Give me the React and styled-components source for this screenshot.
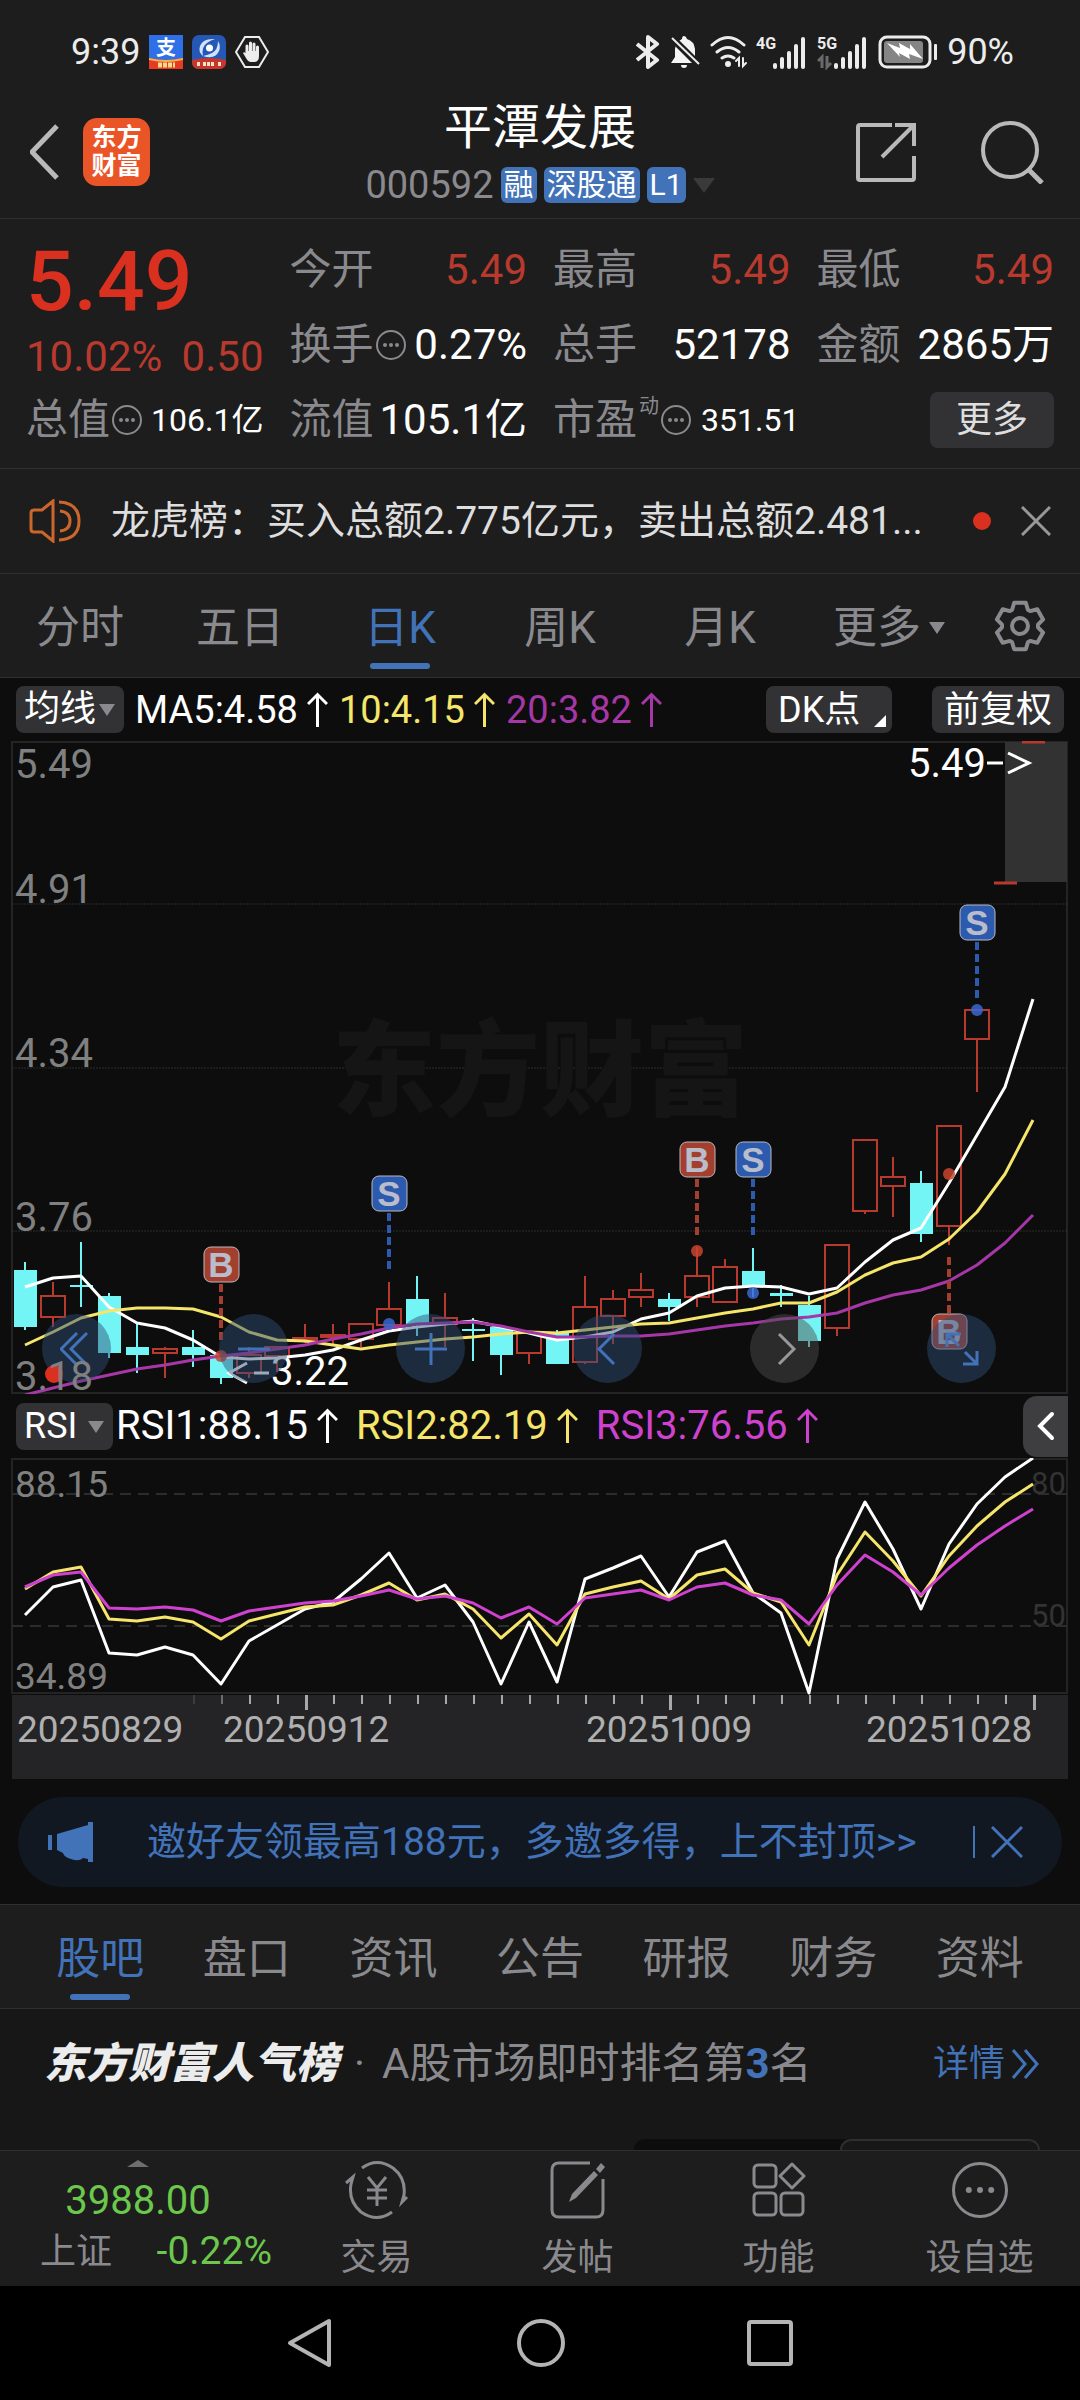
import React from 'react';
import styled, { createGlobalStyle, ThemeProvider } from 'styled-components';

const theme = {
  page: '#0d0d0d',
  panel: '#1d1d1d',
  button: '#323234',
  line: '#2f2f30',
  grey: '#8a8a8e',
  light: '#dededf',
  blue: '#4272b8',
  red: '#d93020',
  softRed: '#b8392e',
  green: '#6cc84c',
  yellow: '#f5e56b',
  purple: '#a637a6',
  magenta: '#cf42cf',
  cyan: '#73f5f5',
};

const GlobalStyle = createGlobalStyle`
  *, *::before, *::after {
    box-sizing: border-box;
  }

  body {
    margin: 0;
    background-color: #000;
    color: #fff;
    font-family: Roboto, "Noto Sans CJK SC", sans-serif;
    font-size: 36px;
    line-height: 1;
  }

  button, select {
    margin: 0;
    padding: 0;
    border: 0;
    background: none;
    color: inherit;
    font: inherit;
    cursor: pointer;
  }

  a {
    color: inherit;
    text-decoration: none;
  }

  h1, h2, p, dl, dt, dd {
    margin: 0;
    font-weight: 400;
  }

  svg {
    display: block;
    flex-shrink: 0;
  }
`;

const StyledApp = styled.div`
  background-color: ${({ theme }) => theme.page};
`;

const StyledStatusBar = styled.div`
  display: flex;
  align-items: center;
  justify-content: space-between;
  height: 70px;
  padding: 34px 66px 0 71px;
  background-color: ${({ theme }) => theme.panel};
  color: #ececec;
`;

const StyledStatusGroup = styled.div`
  display: flex;
  align-items: center;
  gap: 9px;
`;

const StyledHeader = styled.header`
  display: grid;
  grid-template-columns: 1fr auto 1fr;
  align-items: center;
  padding: 30px 30px 15px;
  border-bottom: 1px solid ${({ theme }) => theme.line};
  background-color: ${({ theme }) => theme.panel};
`;

const StyledHeaderSide = styled.div`
  display: flex;
  align-items: center;
  justify-content: ${({ $end }) => ($end ? 'flex-end' : 'flex-start')};
  gap: ${({ $end }) => ($end ? '64px' : '20px')};
`;

const StyledAppLogo = styled.a`
  display: flex;
  align-items: center;
  justify-content: center;
  width: 67px;
  height: 68px;
  border-radius: 14px;
  background-color: #ea5528;
  font-size: 25px;
  font-weight: 700;
  line-height: 28px;
`;

const StyledTitle = styled.h1`
  font-size: 48px;
  line-height: 56px;
  text-align: center;
`;

const StyledCodeRow = styled.div`
  display: flex;
  align-items: center;
  gap: 7px;
  height: 36px;
  margin-top: 11px;
  color: ${({ theme }) => theme.grey};
  font-size: 38px;
`;

const StyledTag = styled.span`
  padding: 0 3px;
  border-radius: 6px;
  background-color: ${({ theme }) => theme.blue};
  color: #fff;
  font-size: 30px;
  line-height: 36px;
`;

const StyledTriangle = styled.span`
  flex-shrink: 0;
  width: 0;
  height: 0;
  border: solid transparent;
  border-width: ${({ $size }) => `0 ${$size}px`};
  border-top: ${({ $tall, $up }) => ($up ? 0 : $tall)}px solid ${({ $color }) => $color};
  border-bottom: ${({ $tall, $up }) => ($up ? $tall : 0)}px solid ${({ $color }) => $color};
`;

const StyledQuote = styled.section`
  display: grid;
  grid-template-columns: repeat(4, minmax(0, 1fr));
  grid-auto-rows: 75px;
  column-gap: 26px;
  padding: 13px 26px 11px;
  border-bottom: 1px solid ${({ theme }) => theme.line};
  background-color: ${({ theme }) => theme.panel};
`;

const StyledPrice = styled.div`
  grid-row: span 2;
  display: flex;
  flex-direction: column;
  justify-content: flex-end;
  gap: 9px;
  padding-bottom: 3px;
  color: ${({ theme }) => theme.red};
`;

const StyledPriceValue = styled.strong`
  font-size: 84px;
  font-weight: 500;
  line-height: 88px;
`;

const StyledPriceChange = styled.div`
  display: flex;
  justify-content: space-between;
  color: ${({ theme }) => theme.softRed};
  font-size: 42px;
  line-height: 44px;
`;

const StyledStat = styled.dl`
  display: flex;
  align-items: center;
  justify-content: ${({ $packed }) => ($packed ? 'flex-start' : 'space-between')};
  gap: ${({ $packed }) => ($packed ? '10px' : '0')};
  white-space: nowrap;
`;

const StyledStatLabel = styled.dt`
  display: flex;
  align-items: center;
  gap: 2px;
  color: ${({ theme }) => theme.grey};
  font-size: 42px;
`;

const StyledStatNote = styled.sup`
  align-self: flex-start;
  font-size: 20px;
  line-height: 14px;
`;

const StyledStatValue = styled.dd`
  color: ${({ theme, $up }) => ($up ? theme.softRed : '#fff')};
  font-size: ${({ $small }) => ($small ? '32px' : '42px')};
`;

const StyledMoreButton = styled.button`
  justify-self: end;
  align-self: center;
  width: 124px;
  height: 56px;
  border-radius: 8px;
  background-color: ${({ theme }) => theme.button};
  color: ${({ theme }) => theme.light};
`;

const StyledNotice = styled.section`
  display: flex;
  align-items: center;
  height: 105px;
  padding: 0 29px;
  border-bottom: 1px solid ${({ theme }) => theme.line};
  background-color: ${({ theme }) => theme.panel};
`;

const StyledNoticeText = styled.a`
  flex: 1;
  margin: 0 46px 0 29px;
  color: ${({ theme }) => theme.light};
  font-size: 39px;
  white-space: nowrap;
`;

const StyledUnreadDot = styled.span`
  width: 18px;
  height: 18px;
  margin-right: 30px;
  border-radius: 50%;
  background-color: ${({ theme }) => theme.red};
`;

const StyledTabs = styled.nav`
  display: flex;
  height: 104px;
  padding: ${({ $inset }) => ($inset ? '0 27px' : '0')};
  border-bottom: 1px solid ${({ theme }) => theme.line};
  background-color: ${({ theme }) => theme.panel};
`;

const StyledTab = styled.button`
  flex: 1;
  display: flex;
  flex-direction: column;
  align-items: center;
  justify-content: flex-end;
  gap: 13px;
  padding-bottom: 8px;
  color: ${({ theme, $active }) => (theme[$active ? 'blue' : 'grey'])};
  font-size: 44px;
  line-height: 44px;

  &::after {
    content: '';
    width: 60px;
    height: 6px;
    border-radius: 3px;
    background-color: ${({ theme, $active }) => ($active ? theme.blue : 'transparent')};
  }
`;

const StyledTabLabel = styled.span`
  display: flex;
  align-items: center;
  gap: 8px;
  padding-left: ${({ $menu }) => ($menu ? '18px' : '0')};
`;

const StyledSettings = styled.button`
  display: flex;
  align-items: center;
  justify-content: center;
  width: 120px;
  color: ${({ theme }) => theme.grey};
`;

const StyledIndicatorRow = styled.div`
  display: flex;
  align-items: center;
  height: ${({ $rsi }) => ($rsi ? '64px' : '63px')};
  padding: ${({ $rsi }) => ($rsi ? '0 12px 0 16px' : '0 16px')};
`;

const StyledPicker = styled.label`
  position: relative;
  display: block;
  width: ${({ $width }) => $width}px;

  ${StyledTriangle} {
    position: absolute;
    top: 18px;
    right: 9px;
    pointer-events: none;
  }
`;

const StyledSelect = styled.select`
  appearance: none;
  width: 100%;
  height: 47px;
  padding: 0 8px;
  border-radius: 8px;
  background-color: ${({ theme }) => theme.button};
  line-height: 47px;
`;

const StyledChip = styled.button`
  display: flex;
  align-items: center;
  justify-content: space-between;
  width: ${({ $width }) => $width}px;
  height: 47px;
  margin-left: ${({ $push }) => ($push ? 'auto' : '40px')};
  padding: 0 6px 0 12px;
  border-radius: 8px;
  background-color: ${({ theme }) => theme.button};
  white-space: nowrap;
`;

const StyledCorner = styled.span`
  align-self: flex-end;
  margin-bottom: 6px;
  border-bottom: 12px solid #fff;
  border-left: 12px solid transparent;
`;

const StyledReading = styled.span`
  display: flex;
  align-items: center;
  gap: 9px;
  margin-left: ${({ $gap }) => $gap}px;
  color: ${({ $color }) => $color};
  font-size: ${({ $large }) => ($large ? '40px' : '38px')};
`;

const StyledCollapse = styled.button`
  display: flex;
  align-items: center;
  justify-content: center;
  width: 45px;
  height: 61px;
  margin-left: auto;
  border-radius: 14px 0 0 14px;
  background-color: #3e3e40;
`;

const StyledChart = styled.div`
  position: relative;
`;

const StyledSvg = styled.svg`
  width: 100%;
  height: auto;
`;

const StyledScale = styled(StyledSvg)`
  position: absolute;
  top: 0;
  left: 0;
  overflow: visible;
  pointer-events: none;
`;

const StyledChartTools = styled.div`
  position: absolute;
  bottom: 11px;
  left: 0;
  display: flex;
  justify-content: space-between;
  width: 100%;
  padding: 0 84px 0 42px;
`;

const StyledRoundButton = styled.button`
  position: relative;
  display: flex;
  align-items: center;
  justify-content: center;
  width: 69px;
  height: 69px;
  border-radius: 50%;
  background-color: ${({ $muted }) => ($muted ? 'rgba(78, 78, 78, 0.48)' : 'rgba(48, 78, 119, 0.48)')};
  color: ${({ theme, $muted }) => ($muted ? '#98989a' : theme.blue)};
`;

const StyledToolBadge = styled.span`
  position: absolute;
  bottom: 0;
  left: 3px;
  width: 18px;
  height: 18px;
  border-radius: 50%;
  background-color: ${({ theme }) => theme.red};
`;

const StyledBanner = styled.section`
  display: flex;
  align-items: center;
  height: 90px;
  margin: 18px 18px 17px;
  padding: 0 39px 0 30px;
  border-radius: 45px;
  background-color: #111821;
  color: ${({ theme }) => theme.blue};
`;

const StyledBannerText = styled.a`
  flex: 1;
  padding-left: 53px;
  font-size: 39px;
  white-space: nowrap;
`;

const StyledBannerClose = styled.button`
  padding-left: 16px;
  border-left: 2px solid ${({ theme }) => theme.blue};
`;

const StyledForum = styled.main`
  border-top: 1px solid ${({ theme }) => theme.line};
`;

const StyledRanking = styled.section`
  display: flex;
  flex-direction: column;
  justify-content: space-between;
  height: 141px;
  padding: 32px 40px 0 44px;
  background-color: #171717;
`;

const StyledRankingRow = styled.div`
  display: flex;
  align-items: center;
  color: ${({ theme }) => theme.grey};
  font-size: 42px;
  line-height: 46px;
  white-space: nowrap;
`;

const StyledRankingName = styled.h2`
  color: #ececec;
  font-size: 42px;
  font-style: italic;
  font-weight: 900;
`;

const StyledRankingText = styled.p`
  margin-left: 16px;

  span {
    margin-right: 17px;
  }

  strong {
    color: ${({ theme }) => theme.blue};
    font-weight: 700;
  }
`;

const StyledDetails = styled.a`
  display: flex;
  align-items: center;
  gap: 6px;
  margin-left: auto;
  color: ${({ theme }) => theme.blue};
  font-size: 36px;
`;

const StyledSegment = styled.div`
  display: flex;
  justify-content: flex-end;
  align-self: flex-end;
  width: 406px;
  height: 11px;
  border-radius: 14px 14px 0 0;
  background-color: ${({ theme }) => theme.page};

  &::after {
    content: '';
    width: 200px;
    border: 2px solid ${({ theme }) => theme.line};
    border-bottom: 0;
    border-radius: 11px 11px 0 0;
    background-color: #171717;
  }
`;

const StyledBottomBar = styled.nav`
  display: flex;
  height: 136px;
  border-top: 1px solid ${({ theme }) => theme.line};
  background-color: ${({ theme }) => theme.panel};
  color: ${({ theme }) => theme.grey};
`;

const StyledIndex = styled.button`
  display: flex;
  flex-direction: column;
  align-items: center;
  width: 276px;
  padding: 9px 4px 0 40px;
`;

const StyledIndexHead = styled.span`
  display: flex;
  flex-direction: column;
  align-items: center;
  width: 100%;
  padding-right: 36px;
`;

const StyledIndexValue = styled.span`
  margin-top: 14px;
  color: ${({ theme }) => theme.green};
  font-size: 40px;
`;

const StyledIndexRow = styled.span`
  display: flex;
  align-items: center;
  justify-content: space-between;
  width: 100%;
  margin-top: 11px;

  em {
    color: ${({ theme }) => theme.green};
    font-size: 39px;
    font-style: normal;
  }
`;

const StyledBottomItem = styled.button`
  flex: 1;
  display: flex;
  flex-direction: column;
  align-items: center;
  gap: 20px;
  padding-top: 9px;
`;

const StyledSystemNav = styled.div`
  display: flex;
  align-items: center;
  justify-content: center;
  gap: 182px;
  height: 114px;
  background-color: #000;
  color: #b4b4b4;
`;

const Stroke = ({ w, h, width = 3, children, ...rest }) => (
  <svg
    width={w}
    height={h}
    viewBox={`0 0 ${w} ${h}`}
    fill="none"
    stroke="currentColor"
    strokeWidth={width}
    aria-hidden="true"
    {...rest}
  >
    {children}
  </svg>
);

const ArrowUp = () => (
  <Stroke w={21} h={36}>
    <path d="M10.500 35V3M1 12l9.500-9.500L20 12" />
  </Stroke>
);

const Cross = ({ size, ...rest }) => (
  <Stroke w={size} h={size} {...rest}>
    <path d={`M1 1L${size - 1} ${size - 1}M${size - 1} 1L1 ${size - 1}`} />
  </Stroke>
);

const MoreDots = ({ size = 30, width = 2, dot = 2 }) => (
  <Stroke w={size} h={size} width={width}>
    <circle cx={size / 2} cy={size / 2} r={size / 2 - width / 2} />
    {[-1, 0, 1].map((n) => (
      <circle
        key={n}
        cx={size / 2 + (n * size) / 5}
        cy={size / 2}
        r={dot}
        fill="currentColor"
        stroke="none"
      />
    ))}
  </Stroke>
);

const SignalIcon = ({ label, faded }) => (
  <svg width="52" height="44" viewBox="0 -5 52 44" fill="#ececec" aria-hidden="true">
    <text x="0" y="14" fontSize="16" fontWeight="700">{label}</text>
    {faded && <path d="M5 33V22l-4 4M10 21v11l4-4" stroke="#6a6a6a" strokeWidth="3" fill="none" />}
    {[6, 12, 18, 25, 32].map((height, i) => (
      <rect key={height} x={17 + i * 7} y={34 - height} width="4" height={height} rx="2" />
    ))}
  </svg>
);

const gearPoints = () => {
  const points = [];
  for (let i = 0; i < 6; i += 1) {
    [[-26, 18], [-14, 24], [14, 24], [26, 18]].forEach(([shift, radius]) => {
      const angle = ((i * 60 + shift - 90) * Math.PI) / 180;
      points.push(`${(26 + radius * Math.cos(angle)).toFixed(1)},${(26 + radius * Math.sin(angle)).toFixed(1)}`);
    });
  }
  return points.join(' ');
};

const StatusBar = () => (
  <StyledStatusBar>
    <StyledStatusGroup>
      <span>9:39</span>
      <svg width="34" height="34" viewBox="0 0 34 34" aria-hidden="true">
        <rect width="34" height="34" fill="#2f6fe8" />
        <path d="M0 23q17 4 34 0v11H0z" fill="#e43b22" />
        <path d="M0 23q17 4 34 0v2q-17 4-34 0z" fill="#f6b34a" />
        <text x="17" y="20" fontSize="20" fontWeight="700" fill="#fff" textAnchor="middle">支</text>
        <path d="M9 30h17" stroke="#ffd98a" strokeWidth="5" strokeDasharray="4 1" />
      </svg>
      <svg width="34" height="34" viewBox="0 0 34 34" aria-hidden="true">
        <rect width="34" height="34" rx="7" fill="#2458b4" />
        <path d="M0 25q17-4 34 0v2q0 7-7 7H7q-7 0-7-7z" fill="#c8352b" />
        <path d="M23 4Q11 3 8 11q-2 6 3 10Q9 12 15 8q4-3 8-4zM11 21q12 4 16-5 2-5-1-10 0 9-6 12-4 2-9 3z" fill="#cfe2ff" />
        <circle cx="17.500" cy="13" r="3.500" fill="#fff" />
        <path d="M5 29h3m3 0h12m3 0h3" stroke="#ffe2c4" strokeWidth="4" strokeDasharray="3 1" />
      </svg>
      <Stroke w={34} h={34} width={2}>
        <path d="M10 2h14l9 15-9 15H10L1 17z" />
        <path d="M12 18V11M15.500 17V8M19 17V9M22.500 18v-6" strokeWidth="3" strokeLinecap="round" />
        <path d="M10.500 16h13.500v5q0 6-5 6h-3q-3 0-5-4l-3-5q1-2 4 1z" fill="currentColor" stroke="none" />
      </Stroke>
    </StyledStatusGroup>
    <StyledStatusGroup>
      <Stroke w={25} h={34} width={4} strokeLinejoin="round">
        <path d="M2 9l20 16-9 7V2l9 7L2 25" />
      </Stroke>
      <svg width="32" height="34" viewBox="0 0 32 34" fill="#f4f4f4" aria-hidden="true">
        <path d="M15 1q2 0 3 3 7 2 8 10v8l3 6H2l4-6v-8Q7 7 13 4q0-3 2-3zM12 30h6q0 3-3 3t-3-3z" />
        <path d="M2 2l28 28" stroke="#1d1d1d" strokeWidth="7" />
        <path d="M3 3l27 26" stroke="#ececec" strokeWidth="2" />
      </svg>
      <Stroke w={37} h={34} width={3} strokeLinecap="round">
        <path d="M2 10q16-15 32 0M7 17q11-9 22 0M12 23q6-4 12 0" />
        <circle cx="18" cy="29" r="3" fill="currentColor" stroke="none" />
        <path d="M29 31v-8l-3 3M33 23v8l3-3" strokeWidth="2" />
      </Stroke>
      <SignalIcon label="4G" />
      <SignalIcon label="5G" faded />
      <svg width="60" height="34" viewBox="0 0 60 34" aria-hidden="true">
        <rect x="2" y="2" width="50" height="30" rx="7" fill="none" stroke="#ececec" strokeWidth="3" />
        <rect x="6" y="6" width="39" height="22" rx="3" fill="#858585" />
        <path d="M9 8l13 5-1-5 11 6v-5l13 15-14-5 1 5-11-6 1 4z" fill="#fff" />
        <rect x="56" y="9" width="3" height="16" rx="1" fill="#ececec" />
      </svg>
      <span>90%</span>
    </StyledStatusGroup>
  </StyledStatusBar>
);

const Header = () => (
  <StyledHeader>
    <StyledHeaderSide>
      <button type="button" aria-label="返回">
        <Stroke w={33} h={56} width={5} color="#b9b9ba">
          <path d="M27 2L2 28l25 26" />
        </Stroke>
      </button>
      <StyledAppLogo href="#home">
        <span>
          东方
          <br />
          财富
        </span>
      </StyledAppLogo>
    </StyledHeaderSide>
    <div>
      <StyledTitle>平潭发展</StyledTitle>
      <StyledCodeRow>
        <span>000592</span>
        <StyledTag>融</StyledTag>
        <StyledTag>深股通</StyledTag>
        <StyledTag>L1</StyledTag>
        <StyledTriangle $size={11} $tall={15} $color="#3a3a3b" />
      </StyledCodeRow>
    </div>
    <StyledHeaderSide $end>
      <button type="button" aria-label="分享">
        <Stroke w={60} h={60} width={4} color="#b9b9ba">
          <path d="M36 3H4q-2 0-2 2v51q0 2 2 2h52q2 0 2-2V34M39 3h19v21M57 4L26 35" />
        </Stroke>
      </button>
      <button type="button" aria-label="搜索">
        <Stroke w={70} h={64} width={4} color="#b9b9ba">
          <circle cx="30" cy="30" r="27" />
          <path d="M49 50l13 13" strokeWidth="5" />
        </Stroke>
      </button>
    </StyledHeaderSide>
  </StyledHeader>
);

const Stat = ({ label, value, up, small, info, note, packed }) => (
  <StyledStat $packed={packed}>
    <StyledStatLabel>
      {label}
      {note && <StyledStatNote>{note}</StyledStatNote>}
      {info && <MoreDots />}
    </StyledStatLabel>
    <StyledStatValue $up={up} $small={small}>{value}</StyledStatValue>
  </StyledStat>
);

const Quote = () => (
  <StyledQuote>
    <StyledPrice>
      <StyledPriceValue>5.49</StyledPriceValue>
      <StyledPriceChange>
        <span>10.02%</span>
        <span>0.50</span>
      </StyledPriceChange>
    </StyledPrice>
    <Stat label="今开" value="5.49" up />
    <Stat label="最高" value="5.49" up />
    <Stat label="最低" value="5.49" up />
    <Stat label="换手" value="0.27%" info />
    <Stat label="总手" value="52178" />
    <Stat label="金额" value="2865万" />
    <Stat label="总值" value="106.1亿" info small />
    <Stat label="流值" value="105.1亿" />
    <Stat label="市盈" note="动" value="351.51" info small packed />
    <StyledMoreButton type="button">更多</StyledMoreButton>
  </StyledQuote>
);

const Notice = () => (
  <StyledNotice>
    <Stroke w={53} h={44} color="#cc672c">
      <path d="M2 14q0-3 3-3h8L24 2v40L13 33H5q-3 0-3-3zM30 3q20 1 20 19T30 41M31 12q10 1 10 10t-10 10" />
    </Stroke>
    <StyledNoticeText href="#notice">龙虎榜：买入总额2.775亿元，卖出总额2.481...</StyledNoticeText>
    <StyledUnreadDot />
    <button type="button" aria-label="关闭">
      <Cross size={30} color="#98989a" />
    </button>
  </StyledNotice>
);

const periods = ['分时', '五日', '日K', '周K', '月K'];

const PeriodTabs = () => (
  <StyledTabs>
    {periods.map((period) => (
      <StyledTab key={period} type="button" $active={period === '日K'}>
        <StyledTabLabel>{period}</StyledTabLabel>
      </StyledTab>
    ))}
    <StyledTab type="button">
      <StyledTabLabel $menu>
        更多
        <StyledTriangle $size={8} $tall={12} $color="#8a8a8e" />
      </StyledTabLabel>
    </StyledTab>
    <StyledSettings type="button" aria-label="设置">
      <Stroke w={52} h={52} width={4} strokeLinejoin="round">
        <polygon points={gearPoints()} />
        <circle cx="26" cy="26" r="8" />
      </Stroke>
    </StyledSettings>
  </StyledTabs>
);

// [rising, high, body top, body bottom, low]
const candles = [
  [0, 521, 529, 586, 589], [1, 541, 555, 576, 586], [0, 501, 544, 546, 566],
  [0, 552, 555, 612, 617], [0, 583, 606, 614, 632], [1, 606, 608, 612, 637],
  [0, 589, 606, 614, 626], [0, 612, 614, 637, 643], [1, 606, 614, 632, 637],
  [1, 606, 606, 615, 631], [1, 583, 597, 599, 602], [1, 583, 594, 596, 604],
  [1, 583, 583, 598, 606], [1, 541, 568, 584, 584], [0, 535, 558, 583, 595],
  [1, 552, 577, 583, 606], [0, 577, 588, 590, 620], [0, 586, 586, 614, 634],
  [1, 592, 592, 612, 623], [0, 589, 592, 623, 623], [1, 535, 566, 621, 623],
  [1, 549, 558, 575, 603], [1, 532, 549, 556, 566], [0, 552, 558, 566, 580],
  [1, 506, 535, 556, 566], [1, 518, 526, 561, 561], [0, 507, 530, 545, 556],
  [0, 544, 552, 555, 566], [0, 555, 564, 600, 606], [1, 504, 504, 587, 595],
  [1, 399, 399, 470, 473], [1, 416, 436, 445, 476], [0, 430, 442, 493, 501],
  [1, 385, 385, 485, 504], [1, 269, 269, 298, 351], [1, 142, 142, 142, 142],
  [1, 1, 1, 1, 1],
];

const ma5 = [546, 537, 535, 566, 582, 587, 599, 616, 618, 617, 614, 609, 599, 590, 586, 583, 580, 586, 592, 599, 596, 591, 578, 572, 555, 547, 545, 546, 553, 547, 521, 499, 487, 442, 394, 346, 258];
const ma10 = [604, 591, 577, 570, 567, 567, 568, 576, 591, 599, 600, 604, 608, 604, 601, 598, 596, 593, 591, 592, 589, 586, 583, 582, 577, 572, 568, 562, 562, 551, 534, 522, 516, 498, 471, 433, 379];
const ma20 = [654, 647, 640, 634, 628, 624, 619, 615, 612, 608, 604, 598, 593, 587, 583, 582, 581, 585, 591, 596, 596, 595, 595, 593, 589, 585, 582, 578, 576, 572, 562, 554, 549, 540, 524, 502, 474];
const rsi1 = [157, 129, 122, 195, 197, 189, 197, 226, 183, 167, 151, 144, 121, 95, 140, 127, 164, 226, 164, 224, 121, 110, 98, 139, 94, 83, 135, 155, 235, 101, 44, 91, 151, 86, 46, 19, 0];
const rsi2 = [131, 114, 109, 161, 163, 159, 164, 181, 163, 156, 149, 147, 137, 125, 142, 136, 151, 180, 156, 187, 136, 129, 123, 141, 117, 111, 135, 144, 187, 117, 74, 103, 138, 98, 68, 44, 26];
const rsi3 = [129, 117, 114, 150, 151, 149, 152, 163, 153, 149, 145, 143, 138, 132, 141, 138, 145, 160, 149, 166, 140, 136, 132, 142, 129, 125, 137, 142, 166, 127, 97, 114, 137, 110, 87, 68, 51];

const markers = [
  { kind: 'B', index: 7, box: 506, dot: 615, lines: [543, 600] },
  { kind: 'S', index: 13, box: 435, dot: 583, lines: [472, 528] },
  { kind: 'B', index: 24, box: 401, dot: 510, lines: [438, 494] },
  { kind: 'S', index: 26, box: 401, dot: 552, lines: [438, 494] },
  { kind: 'S', index: 34, box: 164, dot: 269, lines: [201, 257] },
  { kind: 'B', index: 33, box: 573, dot: 433, lines: [516, 572] },
];

const priceLabels = [['5.49', 37], ['4.91', 162], ['4.34', 326], ['3.76', 490], ['3.18', 649]];
const dates = [['20250829', 17], ['20250912', 223], ['20251009', 586], ['20251028', 866]];

const xAt = (index) => 25 + index * 28;
const toPoints = (values) => values.map((value, index) => `${xAt(index)},${value}`).join(' ');

const Line = ({ values, color }) => (
  <polyline points={toPoints(values)} fill="none" stroke={color} strokeWidth="3" strokeLinejoin="round" />
);

const Candle = ({ index, data }) => {
  const [rising, high, top, bottom, low] = data;
  const x = xAt(index);
  if (!rising) {
    return (
      <g fill={theme.cyan}>
        <rect x={x - 1} y={high} width="2" height={low - high} />
        <rect x={x - 11} y={top} width="23" height={bottom - top} />
      </g>
    );
  }
  return (
    <g fill="none" stroke={theme.softRed} strokeWidth="2">
      <path d={`M${x} ${high}V${top}M${x} ${bottom}V${low}`} />
      {bottom > top ? (
        <rect x={x - 12} y={top} width="24" height={bottom - top} />
      ) : (
        <path d={`M${x - 11} ${top}H${x + 12}`} strokeWidth="3" />
      )}
    </g>
  );
};

const Marker = ({ kind, index, box, dot, lines }) => {
  const x = xAt(index);
  const color = kind === 'B' ? '#a33f2f' : '#2c5aae';
  return (
    <g>
      <path d={`M${x} ${lines[0]}V${lines[1]}`} stroke={color} strokeWidth="4" strokeDasharray="8 4" />
      <circle cx={x} cy={dot} r="6" fill={kind === 'B' ? '#c9452f' : '#3a68d0'} opacity="0.85" />
      <rect x={x - 17} y={box} width="35" height="35" rx="7" fill={color} stroke="#bcb9bd" />
      <text x={x} y={box + 30} fill="#b9bccb" fontSize="35" fontFamily="Liberation Sans" fontWeight="700" textAnchor="middle">
        {kind}
      </text>
    </g>
  );
};

const PriceChart = () => (
  <StyledChart>
    <StyledSvg viewBox="0 0 1080 653" role="img" aria-label="日K">
      <path d="M12 1H1067V652H12z" fill="none" stroke="#242424" strokeWidth="2" />
      <path d="M12 163H1067M12 327H1067M12 490H1067" stroke="#2c2c2c" strokeDasharray="2 1" />
      <text x="540" y="367" fill="#151515" fontSize="104" fontWeight="900" textAnchor="middle">东方财富</text>
      <rect x="1005" y="1" width="62" height="140" fill="#323232" />
      {candles.map((data, index) => (
        <Candle key={xAt(index)} index={index} data={data} />
      ))}
      <Line values={ma5} color="#fff" />
      <Line values={ma10} color={theme.yellow} />
      <Line values={ma20} color={theme.purple} />
      {markers.map((marker) => (
        <Marker key={marker.index} {...marker} />
      ))}
      <g fill="#fff" fontSize="40">
        <text x="271" y="644">3.22</text>
        <text x="908" y="36">5.49</text>
      </g>
      <path d="M247 622l-18 10 18 10M254 632h15M987 22h16M1008 12l21 10-21 10" fill="none" stroke="#fff" strokeWidth="3" />
    </StyledSvg>
    <StyledChartTools>
      <StyledRoundButton type="button" aria-label="最早">
        <Stroke w={34} h={34}>
          <path d="M17 1L1 17l16 16M27 1L11 17l16 16" />
        </Stroke>
        <StyledToolBadge />
      </StyledRoundButton>
      <StyledRoundButton type="button" aria-label="缩小">
        <Stroke w={34} h={34}>
          <path d="M1 17h32" />
        </Stroke>
      </StyledRoundButton>
      <StyledRoundButton type="button" aria-label="放大">
        <Stroke w={34} h={34}>
          <path d="M1 17h32M17 1v32" />
        </Stroke>
      </StyledRoundButton>
      <StyledRoundButton type="button" aria-label="向前">
        <Stroke w={34} h={34}>
          <path d="M23 2L8 17l15 15" />
        </Stroke>
      </StyledRoundButton>
      <StyledRoundButton type="button" aria-label="向后" $muted>
        <Stroke w={34} h={34}>
          <path d="M11 2l15 15-15 15" />
        </Stroke>
      </StyledRoundButton>
      <StyledRoundButton type="button" aria-label="全屏">
        <Stroke w={34} h={34}>
          <path d="M2 15V2h14M3 3l11 11M32 19v13H18M31 31L20 20" />
        </Stroke>
      </StyledRoundButton>
    </StyledChartTools>
    <StyledScale viewBox="0 0 1080 653" fill="#808080" fontSize="40">
      {priceLabels.map(([label, y]) => (
        <text key={label} x="15" y={y}>{label}</text>
      ))}
    </StyledScale>
  </StyledChart>
);

const tickColor = (index) => {
  if (index === 6) return '#3c3c3e';
  return index === 7 ? '#6c6c6e' : '#a8a8a8';
};

const RsiChart = () => (
  <StyledSvg viewBox="0 0 1080 321" role="img" aria-label="RSI">
    <path d="M12 1H1067V235H12z" fill="none" stroke="#242424" strokeWidth="2" />
    <path d="M12 36H1067M12 168H1067" stroke="#2c2c2c" strokeWidth="2" strokeDasharray="11 7" />
    <g fill="#333" fontSize="31">
      <text x="1031" y="36">80</text>
      <text x="1031" y="168">50</text>
    </g>
    <g fill="#808080" fontSize="37">
      <text x="15" y="39">88.15</text>
      <text x="15" y="231">34.89</text>
    </g>
    <Line values={rsi1} color="#fff" />
    <Line values={rsi2} color={theme.yellow} />
    <Line values={rsi3} color={theme.magenta} />
    <rect x="12" y="237" width="1056" height="84" fill="#242426" />
    {candles.map((_, index) => index > 5 && (
      <rect
        key={xAt(index)}
        x={xAt(index)}
        y="237"
        width={index % 13 === 10 ? 3 : 2}
        height={index % 13 === 10 ? 15 : 9}
        fill={tickColor(index)}
      />
    ))}
    <g fill="#b0b0b0" fontSize="37">
      {dates.map(([date, x]) => (
        <text key={date} x={x} y="284">{date}</text>
      ))}
    </g>
  </StyledSvg>
);

const Reading = ({ children, color, gap, large }) => (
  <StyledReading $color={color} $gap={gap} $large={large}>
    {children}
    <ArrowUp />
  </StyledReading>
);

const Charts = () => (
  <section>
    <StyledIndicatorRow>
      <StyledPicker $width={108}>
        <StyledSelect aria-label="主图指标">
          <option>均线</option>
        </StyledSelect>
        <StyledTriangle $size={8} $tall={12} $color="#8a8a8e" />
      </StyledPicker>
      <Reading color="#fff" gap={11}>MA5:4.58</Reading>
      <Reading color={theme.yellow} gap={11}>10:4.15</Reading>
      <Reading color={theme.purple} gap={11}>20:3.82</Reading>
      <StyledChip type="button" $width={126} $push>
        DK点
        <StyledCorner />
      </StyledChip>
      <StyledChip type="button" $width={132}>前复权</StyledChip>
    </StyledIndicatorRow>
    <PriceChart />
    <StyledIndicatorRow $rsi>
      <StyledPicker $width={97}>
        <StyledSelect aria-label="副图指标">
          <option>RSI</option>
        </StyledSelect>
        <StyledTriangle $size={8} $tall={12} $color="#8a8a8e" />
      </StyledPicker>
      <Reading color="#fff" gap={3} large>RSI1:88.15</Reading>
      <Reading color={theme.yellow} gap={18} large>RSI2:82.19</Reading>
      <Reading color={theme.magenta} gap={18} large>RSI3:76.56</Reading>
      <StyledCollapse type="button" aria-label="展开">
        <Stroke w={18} h={30} width={4} strokeLinecap="round">
          <path d="M15 3L3 15l12 12" />
        </Stroke>
      </StyledCollapse>
    </StyledIndicatorRow>
    <RsiChart />
  </section>
);

const Banner = () => (
  <StyledBanner>
    <svg width="46" height="40" viewBox="0 0 46 40" fill="currentColor" aria-hidden="true">
      <path d="M0 13h4v15H0zM9 12L40 3V0h5v40h-5v-3l-5-1q-4 4-12 1-7-2-8-6l-6-3z" />
    </svg>
    <StyledBannerText href="#invite">邀好友领最高188元，多邀多得，上不封顶&gt;&gt;</StyledBannerText>
    <StyledBannerClose type="button" aria-label="关闭">
      <Cross size={32} />
    </StyledBannerClose>
  </StyledBanner>
);

const sections = ['股吧', '盘口', '资讯', '公告', '研报', '财务', '资料'];

const Forum = () => (
  <StyledForum>
    <StyledTabs $inset>
      {sections.map((name) => (
        <StyledTab key={name} type="button" $active={name === '股吧'}>
          <StyledTabLabel>{name}</StyledTabLabel>
        </StyledTab>
      ))}
    </StyledTabs>
    <StyledRanking>
      <StyledRankingRow>
        <StyledRankingName>东方财富人气榜</StyledRankingName>
        <StyledRankingText>
          <span>·</span>
          A股市场即时排名第
          <strong>3</strong>
          名
        </StyledRankingText>
        <StyledDetails href="#ranking">
          详情
          <Stroke w={29} h={30}>
            <path d="M2 1l12 14L2 29M14 1l12 14-12 14" />
          </Stroke>
        </StyledDetails>
      </StyledRankingRow>
      <StyledSegment />
    </StyledRanking>
  </StyledForum>
);

const BottomBar = () => (
  <StyledBottomBar>
    <StyledIndex type="button">
      <StyledIndexHead>
        <StyledTriangle $size={11} $tall={7} $color="#6e6e70" $up />
        <StyledIndexValue>3988.00</StyledIndexValue>
      </StyledIndexHead>
      <StyledIndexRow>
        上证
        <em>-0.22%</em>
      </StyledIndexRow>
    </StyledIndex>
    <StyledBottomItem type="button">
      <Stroke w={66} h={60}>
        <path d="M18 8q15-11 31 0 13 10 11 27l-2 7 5-5M48 52q-15 11-31 0Q4 41 7 24l2-7-7 6" />
        <path d="M24 17l9 11 9-11M33 28v18M23 30h20M23 38h20" />
      </Stroke>
      交易
    </StyledBottomItem>
    <StyledBottomItem type="button">
      <Stroke w={56} h={60}>
        <path d="M40 3H9Q2 3 2 10v40q0 7 7 7h37q7 0 7-7V19" />
        <path d="M22 34l22-23 4 4-22 23-7 4zM46 9l5-6 4 4-5 6z" fill="currentColor" stroke="none" />
      </Stroke>
      发帖
    </StyledBottomItem>
    <StyledBottomItem type="button">
      <Stroke w={54} h={60}>
        <rect x="2" y="5" width="22" height="22" rx="4" />
        <rect x="2" y="33" width="22" height="22" rx="4" />
        <rect x="29" y="33" width="22" height="22" rx="4" />
        <path d="M40 4l12 12-12 12-12-12z" strokeLinejoin="round" />
      </Stroke>
      功能
    </StyledBottomItem>
    <StyledBottomItem type="button">
      <svg width="60" height="60" viewBox="-2 -2 60 60" aria-hidden="true">
        <MoreDots size={56} width={3} dot={3} />
      </svg>
      设自选
    </StyledBottomItem>
  </StyledBottomBar>
);

const SystemNav = () => (
  <StyledSystemNav>
    <button type="button" aria-label="返回">
      <Stroke w={48} h={50} width={4} strokeLinejoin="round">
        <path d="M42 3v44L3 25z" />
      </Stroke>
    </button>
    <button type="button" aria-label="主页">
      <Stroke w={48} h={48} width={4}>
        <circle cx="24" cy="24" r="22" />
      </Stroke>
    </button>
    <button type="button" aria-label="最近任务">
      <Stroke w={46} h={46} width={4}>
        <rect x="2" y="2" width="42" height="42" rx="2" />
      </Stroke>
    </button>
  </StyledSystemNav>
);

const App = () => (
  <ThemeProvider theme={theme}>
    <GlobalStyle />
    <StyledApp>
      <StatusBar />
      <Header />
      <Quote />
      <Notice />
      <PeriodTabs />
      <Charts />
      <Banner />
      <Forum />
      <BottomBar />
      <SystemNav />
    </StyledApp>
  </ThemeProvider>
);

export default App;
